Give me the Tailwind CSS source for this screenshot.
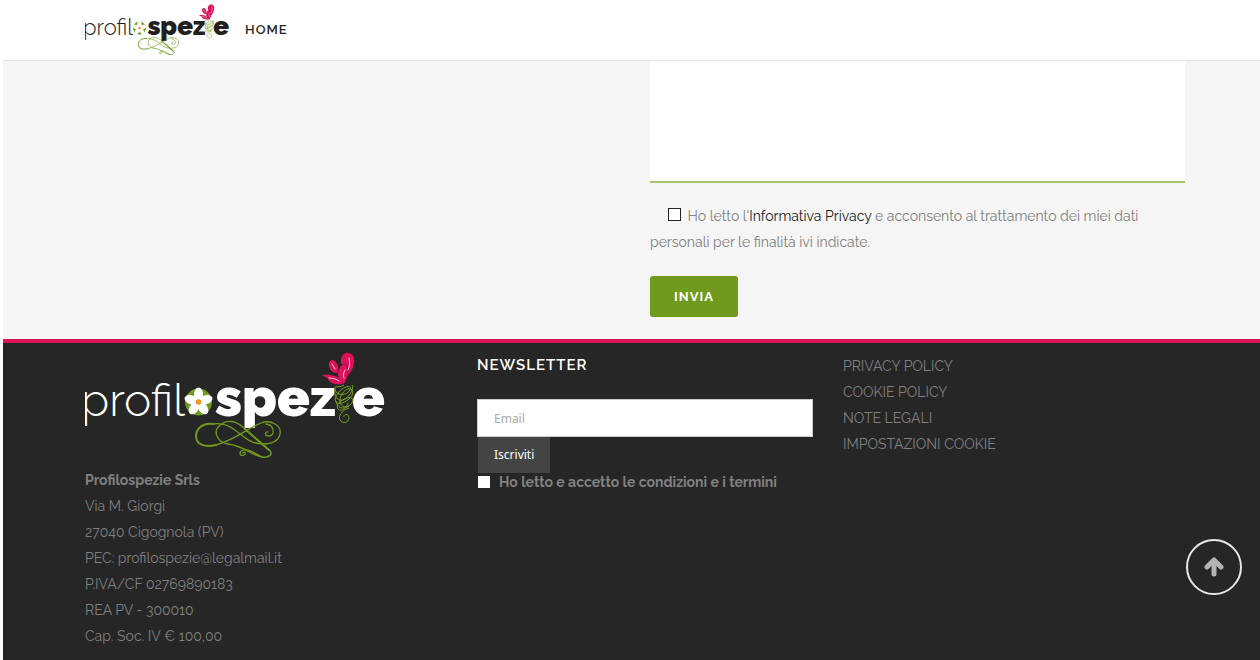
<!DOCTYPE html>
<html lang="it">
<head>
  <meta charset="UTF-8" />
  <meta name="viewport" content="width=device-width, initial-scale=1.0" />
  <title>Profilospezie</title>
  <script src="https://cdn.jsdelivr.net/npm/@tailwindcss/browser@4"></script>
</head>
<body class="min-h-screen flex flex-col bg-white pl-[3px] font-['Raleway','Lato',sans-serif] text-sm leading-[26px] text-[#808080]">

  <!-- Forme del logo condivise tra testata e footer -->
  <svg class="hidden" aria-hidden="true">
    <symbol id="logo" viewBox="0 0 300 108">
      <text x="-4" y="64" font-family="Raleway" font-weight="300" font-size="46" fill="currentColor">profil</text>
      <text x="130" y="64" font-family="Raleway" font-weight="900" font-size="54" fill="currentColor">spez</text>
      <text x="267" y="64" font-family="Raleway" font-weight="900" font-size="54" fill="currentColor">e</text>
      <!-- fiore -->
      <circle cx="113.500" cy="50" r="13.500" fill="#6f9a1d" />
      <g fill="#fff">
        <ellipse cx="113.500" cy="42.500" rx="4.500" ry="7" />
        <ellipse cx="113.500" cy="42.500" rx="4.500" ry="7" transform="rotate(72 113.500 50)" />
        <ellipse cx="113.500" cy="42.500" rx="4.500" ry="7" transform="rotate(144 113.500 50)" />
        <ellipse cx="113.500" cy="42.500" rx="4.500" ry="7" transform="rotate(216 113.500 50)" />
        <ellipse cx="113.500" cy="42.500" rx="4.500" ry="7" transform="rotate(288 113.500 50)" />
      </g>
      <circle cx="113.500" cy="50" r="2.800" fill="#f7941d" />
      <!-- petali -->
      <g fill="#e0115a">
        <path d="M262 25c1-6-4-10-6-14-1-6 3-11 8-10 6 1 6 9 4 14-1 4-4 7-6 10z" />
        <path d="M259 32c-7-4-8-12-4-17 4-5 8-3 8 3 0 5-1 10-4 14z" stroke="#262626" stroke-width=".5" />
        <path d="M252 21c-5 0-9-5-8-10 2-5 6-3 8 1 2 3 1 6 0 9z" />
        <path d="M258 32c-9 1-13-1-15-5-1-2-4-2-6-4 8-1 18 0 21 9z" />
      </g>
      <g fill="none" stroke="#fff" stroke-width=".8" stroke-linecap="round">
        <path d="M264 6c1 4 1 8-1 12M260 18c-2 4-2 5-1 8M247 12l3 5M244 26c4 0 7 1 10 3" />
      </g>
      <!-- stelo arricciato -->
      <g fill="none" stroke="#77a51f">
        <path d="M259 33c-6 4-11-1-9 5s12 6 15 0-7-4-12 3-3 12 4 10 13-9 10-13-11 2-12 9 5 10 10 6 3-9-3-7-12 7-9 11 9-2 10-6" />
        <path d="M250 36c-2 9 4 15 10 11s9-11 7-14M251 49c1 7 7 9 13 5M264 56c-7 2-11 8-9 12s9 3 9-2-6-4-5-1" />
      </g>
      <!-- svolazzi -->
      <g fill="none" stroke="#6f9a1d" stroke-linecap="round">
        <path d="M128 72C118 70 111 77 111 84C111 92 119 96 131 93" stroke-width="2" />
        <path d="M131 93C150 88 163 76 176 71C186 67 197 74 195 82C193 90 185 92 178 92C165 92 158 84 150 78C143 73 135 71 128 72" stroke-width="1.300" />
        <path d="M143 92C132 90 128 80 134 74C142 66 152 69 160 77" stroke-width="1.300" />
        <path d="M160 77C168 84 177 92 184 98" stroke-width="2.200" />
        <path d="M184 98C189 102 184 106 177 105C165 103 160 94 143 92" stroke-width="1.500" />
        <path d="M177 105C170 102 164 96 158 98C153 100 155 105 159 103C162 101 159 99 158 101M181 72C190 73 190 84 184 84C179 84 180 79 183 80" stroke-width="1.300" />
      </g>
    </symbol>
  </svg>

  <header class="h-[61px] shrink-0 flex bg-white border-b border-[#e4e4e4] pl-[82px] pt-1">
    <a href="#" aria-label="Profilospezie" class="text-[#202020]">
      <svg class="w-36 h-[52px]"><use href="#logo" /></svg>
    </a>
    <nav class="pl-4 pt-3">
      <a href="#" class="text-[13px] font-semibold tracking-[1px] text-[#262626]">HOME</a>
    </nav>
  </header>

  <main class="bg-[#f5f5f5] pl-[82px] pr-[75px]">
    <form class="grid grid-cols-2 gap-[30px] pb-[22px]" onsubmit="return false">
      <div class="col-start-2">
        <textarea aria-label="Messaggio" class="block w-full h-[122px] resize-none bg-white border-b-2 border-[#a9c46c] outline-none"></textarea>
        <p class="pt-5">
          <input id="privacy" type="checkbox" class="appearance-none size-[13px] border border-[#222] bg-white ml-[18px] mr-[3px] checked:bg-[#6f9a1d]" />
          <label for="privacy">Ho letto l'<a href="#" class="text-[#222]">Informativa Privacy</a> e acconsento al trattamento dei miei dati personali per le finalità ivi indicate.</label>
        </p>
        <button class="mt-[21px] h-[41px] px-6 rounded-[3px] bg-[#6f9a1d] text-[13px] font-bold tracking-[1px] text-white">INVIA</button>
      </div>
    </form>
  </main>

  <footer class="grow grid grid-cols-[392fr_366fr_342fr] border-t-4 border-[#dc1458] bg-[#262626] pl-[82px] pr-[75px] pt-[9px]">
    <div>
      <a href="#" aria-label="Profilospezie" class="text-white">
        <svg class="block w-[300px] h-[108px]"><use href="#logo" /></svg>
      </a>
      <address class="not-italic pt-[7px]">
        <strong>Profilospezie Srls</strong><br />
        Via M. Giorgi<br />
        27040 Cigognola (PV)<br />
        PEC: profilospezie@legalmail.it<br />
        P.IVA/CF 02769890183<br />
        REA PV - 300010<br />
        Cap. Soc. IV € 100,00
      </address>
    </div>

    <form class="pr-[30px]" onsubmit="return false">
      <h5 class="text-[15px] font-semibold tracking-[1px] text-white">NEWSLETTER</h5>
      <input type="email" placeholder="Email" aria-label="Email"
             class="block w-full h-[38px] mt-[21px] px-4 bg-white border border-[#ccc] font-['Noto_Sans',sans-serif] text-xs text-[#444] placeholder:text-[#aaa] outline-none" />
      <button class="block ml-px h-9 px-4 bg-[#444] font-['Noto_Sans',sans-serif] text-xs text-white">Iscriviti</button>
      <div class="flex items-center gap-[9px] h-[18px]">
        <input id="termini" type="checkbox" class="appearance-none size-3 ml-px bg-white checked:bg-[#6f9a1d]" />
        <label for="termini" class="font-bold">Ho letto e accetto le condizioni e i termini</label>
      </div>
    </form>

    <ul class="pt-px">
      <li><a href="#">PRIVACY POLICY</a></li>
      <li><a href="#">COOKIE POLICY</a></li>
      <li><a href="#">NOTE LEGALI</a></li>
      <li><a href="#">IMPOSTAZIONI COOKIE</a></li>
    </ul>
  </footer>

  <button aria-label="Torna su" class="fixed right-[18px] bottom-[65px] size-14 flex items-center justify-center rounded-full border-2 border-[#e8e8e8] text-[#b3b3b3]">
    <svg class="size-5" viewBox="0 0 20 20" fill="none" stroke="currentColor" stroke-width="5" stroke-linecap="round" stroke-linejoin="round">
      <path d="M10 17V4" /><path d="M3 10 10 3l7 7" />
    </svg>
  </button>
</body>
</html>
